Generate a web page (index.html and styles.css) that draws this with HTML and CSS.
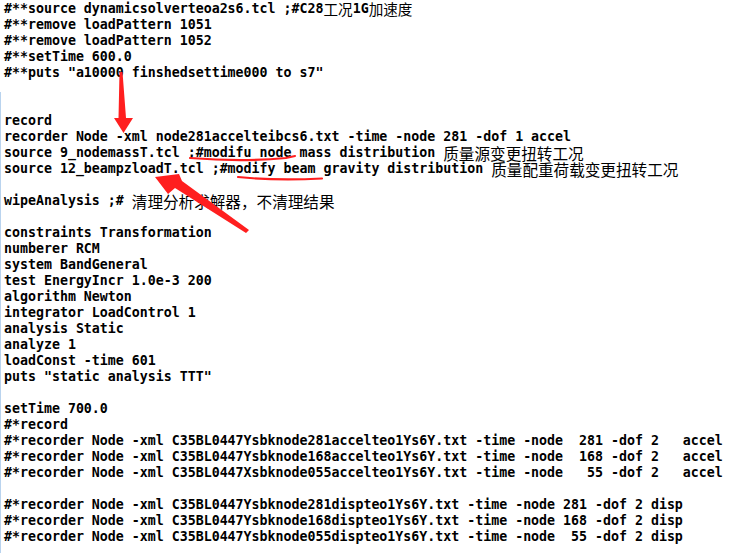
FILE: index.html
```html
<!DOCTYPE html>
<html>
<head>
<meta charset="utf-8">
<link rel="stylesheet" href="styles.css">
</head>
<body>
<div class="page">
<pre class="code">#**source dynamicsolverteoa2s6.tcl ;#C28<span class="cjk sm">工况</span>1G<span class="cjk sm">加速度</span>
#**remove loadPattern 1051
#**remove loadPattern 1052
#**setTime 600.0
#**puts "a10000 finshedsettime000 to s7"


record
recorder Node -xml node281accelteibcs6.txt -time -node 281 -dof 1 accel
source 9_nodemassT.tcl ;#modifu node mass distribution <span class="cjk">质量源变更扭转工况</span>
source 12_beampzloadT.tcl ;#modify beam gravity distribution <span class="cjk">质量配重荷载变更扭转工况</span>

wipeAnalysis ;# <span class="cjk">清理分析求解器，不清理结果</span>

constraints Transformation
numberer RCM
system BandGeneral
test EnergyIncr 1.0e-3 200
algorithm Newton
integrator LoadControl 1
analysis Static
analyze 1
loadConst -time 601
puts "static analysis TTT"

setTime 700.0
#*record
#*recorder Node -xml C35BL0447Ysbknode281accelteo1Ys6Y.txt -time -node  281 -dof 2   accel
#*recorder Node -xml C35BL0447Ysbknode168accelteo1Ys6Y.txt -time -node  168 -dof 2   accel
#*recorder Node -xml C35BL0447Xsbknode055accelteo1Ys6Y.txt -time -node   55 -dof 2   accel

#*recorder Node -xml C35BL0447Ysbknode281dispteo1Ys6Y.txt -time -node 281 -dof 2 disp
#*recorder Node -xml C35BL0447Ysbknode168dispteo1Ys6Y.txt -time -node 168 -dof 2 disp
#*recorder Node -xml C35BL0447Ysbknode055dispteo1Ys6Y.txt -time -node  55 -dof 2 disp</pre>
<div class="edge"></div>
<svg class="marks" width="744" height="553" viewBox="0 0 744 553">
  <polygon points="119.5,72 122.5,72 126,118 133,118 123.5,133 114,118 118.5,118" fill="#ff1f1f"/>
  <polygon points="155,177 179,174 182,181 249,230 246,233 175,188 168,194" fill="#ff1f1f"/>
  <path d="M190 158 C 215 160, 255 161, 286 158 L 295 156" stroke="#ff1f1f" stroke-width="2.2" fill="none" stroke-linecap="round"/>
  <path d="M238 177 C 262 179.5, 295 180, 322 178.5" stroke="#ff1f1f" stroke-width="2.2" fill="none" stroke-linecap="round"/>
</svg>
</div>
</body>
</html>
```

FILE: styles.css
```css
html, body {
  margin: 0;
  padding: 0;
  background: #ffffff;
}
.page {
  position: relative;
  width: 744px;
  height: 553px;
  overflow: hidden;
}
.code {
  margin: 0;
  padding: 1px 0 0 4px;
  font-family: "DejaVu Sans Mono", "Liberation Mono", monospace;
  font-weight: bold;
  font-size: 13.28px;
  line-height: 16px;
  color: #000000;
  white-space: pre;
}
.cjk {
  display: inline-block;
  height: 16px;
  line-height: 16px;
  vertical-align: top;
  font-family: "Noto Sans CJK SC", sans-serif;
  font-weight: normal;
  font-size: 15.6px;
}
.cjk.sm {
  font-size: 14.6px;
}
.edge {
  position: absolute;
  left: 0;
  top: 92px;
  bottom: 0;
  width: 1px;
  background: #b9d3ee;
}
.marks {
  position: absolute;
  left: 0;
  top: 0;
}
```
